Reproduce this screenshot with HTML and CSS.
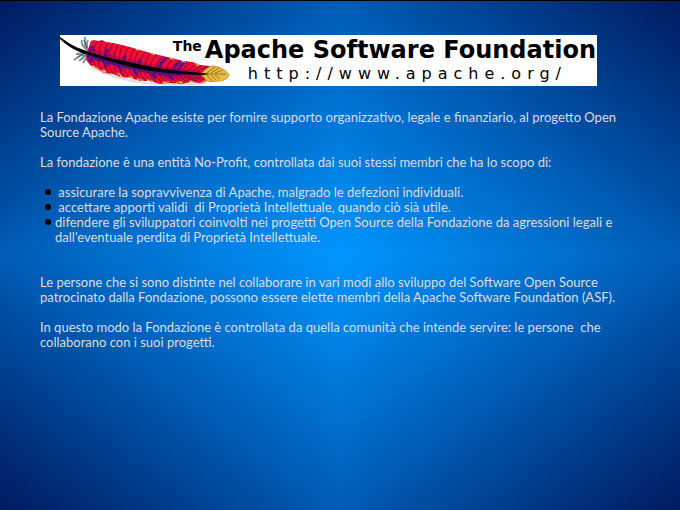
FILE: index.html
```html
<!DOCTYPE html>
<html lang="it">
<head>
<meta charset="utf-8">
<title>Apache Software Foundation</title>
<link rel="stylesheet" href="styles.css">
</head>
<body>
<main class="slide">
  <header class="banner">
    <svg class="feather" viewBox="0 0 170 51" aria-hidden="true">
      <defs>
        <clipPath id="vane">
          <path d="M31 6L34 5L38 6L42 5L46 7L53 8L62 10L70 12L80 15L91 18L103 21L112 23L123 26L133 27L140 30L150 31L142 39L147 46L142 48L130 47L122 49L110 48L100 49L90 46L80 46L70 43L60 42L53 39L44 38L38 34L30 30L26 25L28 15Z"/>
        </clipPath>
      </defs>
      <path d="M31 32Q55 44 85 48Q120 51 146 48" fill="none" stroke="#ddd" stroke-width="2"/>
      <g fill="none" stroke="#85939a" stroke-width="2">
        <path d="M27 15Q20 9 22 5M27 16Q24 8 25 2M28 16Q26 9 28 5"/>
        <path d="M26 17Q20 19 16 19M27 18Q20 20 14 25M27 18Q23 23 19 26M28 19Q25 25 23 28"/>
      </g>
      <path d="M24 5L27 13M18 22L25 18M21 25L26 20" stroke="#46545a"/>
      <g clip-path="url(#vane)" fill="none">
        <path d="M20 0H155V51H20Z" fill="#f20d35"/>
        <path d="M26 17Q60 28 90 34T140 39" stroke="#c00a48" stroke-width="10"/>
        <path d="M26 19Q60 30 90 35T122 38" stroke="#5b1090" stroke-width="6"/>
        <g stroke="#5b1090" stroke-width="3">
          <path d="M32 17q-1-4 1-6M46 22q-1-4 2-8M64 27q-1-4 2-7M79 31q-1-4 2-7M98 34q2-6 8-11M113 37q2-7 8-11M118 37q2-7 9-11"/>
          <path d="M30 20q0 5 2 7M44 25q1 4 3 7M58 29q1 4 4 7M73 33q2 5 5 7M90 36q3 5 6 7M106 38q3 4 7 6"/>
        </g>
        <path d="M33 31l5 3M41 35l5 2M57 38l5 4M68 42l5 1M77 44l6 2M87 45l6 2M102 48l7-1M116 48l7-1M130 46l5 2M142 47l4-1M76 14l4 1M90 18l5 1M110 23l4 1M122 26l4 1M135 29l4 1" stroke="#ffb743" stroke-width="2"/>
        <g stroke="#600838" stroke-width="1" stroke-opacity=".75">
          <path d="M30 17q-2-8 3-13M35 19q-2-8 3-14M40 20q-2-8 3-14M45 22q-2-9 4-15M50 23q-2-9 4-15M55 25q-2-9 4-16M60 26q-2-9 4-16M65 28q-2-9 4-16M70 29q-1-9 5-15M75 30q-1-9 5-15M80 32q-1-9 6-15M85 33q0-9 6-15M90 34q0-8 7-14M95 35q1-8 8-14M100 35q1-7 8-13M105 36q2-7 9-13M110 37q2-7 10-12M115 37q3-6 11-11M120 38q3-6 11-10M125 38q4-5 12-9M130 39q4-5 12-9M135 39q4-5 13-8M140 39q4-4 10-8"/>
          <path d="M28 18q-1 8 4 13M33 20q-1 9 5 15M38 21q-1 9 5 15M43 23q0 9 6 15M48 24q0 9 6 15M53 26q0 9 7 15M58 27q0 9 7 15M63 29q1 8 7 14M68 30q1 8 8 14M73 32q1 8 8 14M78 33q2 8 9 14M83 34q2 8 9 13M88 35q2 8 10 13M93 36q3 7 10 12M98 37q3 7 11 11M103 38q3 7 11 11M108 38q4 7 12 11M113 39q4 6 12 9M118 39q4 6 12 9M123 39q5 5 12 8M128 40q5 5 12 8M133 40q5 4 12 7M138 40q4 4 9 6"/>
        </g>
      </g>
      <path d="M141 39Q148 31 154 31Q165 33 169 40Q168 45 159 46Q151 47 147 46Z" fill="#e7bd43" stroke="#c89830"/>
      <path d="M143 39H166M147 38l8-6M151 38l8-5M155 38l8-3M147 40l5 6M151 40l5 5M155 40l5 4" fill="none" stroke="#8a6418" stroke-width=".8"/>
      <path d="M0 2Q8 8 16 12Q43 23 65 26Q98 35 143 38L149 39L143 40Q96 39 63 30Q38 23 22 18Q9 13 0 4Z" fill="#000"/>
    </svg>
    <div class="titles">
      <h1><span class="the">The</span> Apache Software Foundation</h1>
      <a class="url" href="http://www.apache.org/">http://www.apache.org/</a>
    </div>
  </header>

  <p>La Fondazione Apache esiste per fornire supporto organizzativo, legale e finanziario, al progetto Open Source Apache.</p>
  <p>La fondazione è una entità No-Profit, controllata dai suoi stessi membri che ha lo scopo di:</p>
  <ul>
    <li>&nbsp;assicurare la sopravvivenza di Apache, malgrado le defezioni individuali.</li>
    <li>&nbsp;accettare apporti validi&nbsp; di Proprietà Intellettuale, quando ciò sià utile.</li>
    <li>difendere gli sviluppatori coinvolti nei progetti Open Source della Fondazione da agressioni legali e dall'eventuale perdita di Proprietà Intellettuale.</li>
  </ul>
  <p>Le persone che si sono distinte nel collaborare in vari modi allo sviluppo del Software Open Source patrocinato dalla Fondazione, possono essere elette membri della Apache Software Foundation (ASF).</p>
  <p>In questo modo la Fondazione è controllata da quella comunità che intende servire: le persone&nbsp; che collaborano con i suoi progetti.</p>
</main>
</body>
</html>
```
FILE: styles.css
```css
* {
  box-sizing: border-box;
}

body {
  margin: 0;
  min-height: 100vh;
  border-top: 1px solid #000;
  font: 13px/15px Lato, "Liberation Sans", sans-serif;
  color: #ddd;
  background:
    linear-gradient(to top left, #0096ff, #005cb4 50%, #001a60) 0 0 / 50% 50%,
    linear-gradient(to top right, #0096ff, #005cb4 50%, #001a60) 100% 0 / 50% 50%,
    linear-gradient(to bottom left, #0096ff, #005cb4 50%, #001a60) 0 100% / 50% 50%,
    linear-gradient(to bottom right, #0096ff, #005cb4 50%, #001a60) 100% 100% / 50% 50%;
  background-repeat: no-repeat;
}

.slide {
  padding: 34px 60px 40px 40px;
}

.banner {
  display: grid;
  margin: 0 23px 24px 20px;
  background: #fff;
  color: #000;
  font-family: "DejaVu Sans", sans-serif;
}

.feather,
.titles {
  grid-area: 1 / 1;
}

.feather {
  width: 170px;
  height: 51px;
}

.titles {
  justify-self: end;
  padding-right: 1px;
}

h1 {
  display: flex;
  gap: 3px;
  margin: 0;
  font-size: 24px;
  line-height: 30px;
}

.the {
  font-size: 14px;
  line-height: 22px;
}

.url {
  display: block;
  padding-right: 29px;
  text-align: right;
  font-size: 16px;
  line-height: 18px;
  letter-spacing: 6px;
  color: #000;
  text-decoration: none;
}

p {
  margin: 0 0 15px;
}

ul {
  margin: 0 0 30px;
  padding: 0;
  list-style: none;
}

li {
  display: grid;
  grid-template-columns: 15px 1fr;
}

li::before {
  content: "";
  width: 6px;
  height: 6px;
  margin: 4px 0 0 5px;
  border-radius: 50%;
  background: #000;
}
```
